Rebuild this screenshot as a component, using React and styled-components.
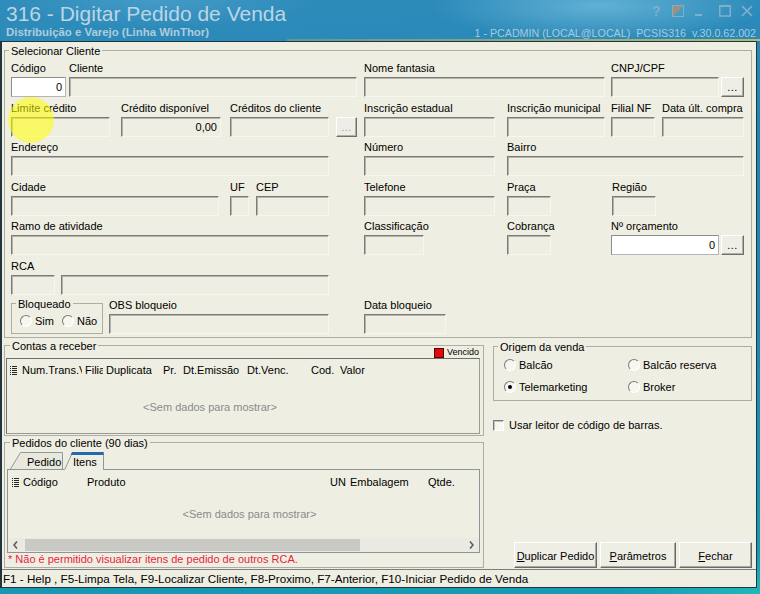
import React from "react";
import styled, { createGlobalStyle } from "styled-components";

const GlobalStyle = createGlobalStyle`
  html, body {
    margin: 0;
    padding: 0;
    background: #1c86b0;
  }
  body {
    font-family: "Liberation Sans", Arial, sans-serif;
    font-size: 11px;
    color: #000;
  }
  * {
    box-sizing: border-box;
  }
`;

const Screen = styled.div`
  position: relative;
  width: 760px;
  height: 594px;
  overflow: hidden;
  display: flex;
  flex-direction: column;
  background:
    radial-gradient(ellipse 240px 50px at 600px 6px, rgba(150, 215, 238, 0.5), transparent 70%),
    radial-gradient(ellipse 220px 40px at 160px 0px, rgba(120, 190, 225, 0.3), transparent 70%),
    radial-gradient(ellipse 200px 60px at 760px 594px, rgba(40, 200, 190, 0.6), transparent 70%),
    linear-gradient(175deg, #2f8cbb 0%, #2385b5 30%, #1b88b2 60%, #169db3 100%);
`;

/* ---------- title area ---------- */

const Header = styled.header`
  position: relative;
  height: 41px;
  flex-shrink: 0;
  display: flex;
  justify-content: space-between;

  &::after {
    content: "";
    position: absolute;
    left: 287px;
    right: 0;
    bottom: 0;
    height: 2px;
    background: linear-gradient(90deg, rgba(190, 180, 90, 0.35), rgba(205, 195, 105, 0.85));
  }
`;

const TitleBlock = styled.div`
  padding: 2px 0 0 6px;
  color: #bcd5e4;
`;

const Title = styled.div`
  font-size: 21px;
  line-height: 24px;
`;

const Subtitle = styled.div`
  font-size: 11.4px;
  font-weight: bold;
  line-height: 13px;
  color: #b0ccdc;
`;

const WinInfo = styled.div`
  display: flex;
  flex-direction: column;
  align-items: flex-end;
  padding: 5px 4px 1px 0;
`;

const Controls = styled.div`
  display: flex;
  align-items: flex-start;
  height: 12px;
  margin-right: 3px;
  color: #7fb0ca;
`;

const Ctl = styled.span`
  display: block;
  width: ${(p) => p.$w}px;
  margin-left: ${(p) => p.$ml || 0}px;
  font-size: 14px;
  font-weight: bold;
  line-height: 12px;
`;

const InfoLine = styled.div`
  margin-top: auto;
  font-size: 10.7px;
  line-height: 13px;
  color: #a8cadb;
  white-space: pre;
`;

/* ---------- window body ---------- */

const Window = styled.div`
  width: 757px;
  height: 547px;
  flex-shrink: 0;
  background: #efeee2;
  border: 1px solid #22343c;
  border-left-width: 2px;
  display: flex;
  flex-direction: column;
`;

const Content = styled.div`
  flex: 1;
  min-height: 0;
  display: flex;
  flex-direction: column;
  padding: 0 4px 0 2px;
`;

const Group = styled.fieldset`
  margin: ${(p) => p.$mt || 0}px 0 0 0;
  min-width: 0;
  padding: ${(p) => p.$pad};
  border: 1px solid #aeada2;
`;

const Legend = styled.legend`
  padding: 3px 2px 0;
  margin-left: ${(p) => p.$ml || 0}px;
  font-size: 11px;
  line-height: 11px;
`;

const Rows = styled.div`
  display: flex;
  flex-direction: column;
  gap: 3.5px;
`;

const Row = styled.div`
  display: flex;
  align-items: flex-end;
  height: 36px;
`;

const FieldCol = styled.div`
  display: flex;
  flex-direction: column;
  width: ${(p) => p.$w}px;
  margin-left: ${(p) => p.$ml || 0}px;
  flex-shrink: 0;
`;

const Label = styled.div`
  height: 14px;
  line-height: 14px;
  margin-bottom: 2px;
  white-space: nowrap;
`;

const InputLine = styled.div`
  display: flex;
  align-items: center;
`;

const Input = styled.div`
  width: ${(p) => p.$w}px;
  height: 20px;
  border: 1px solid;
  border-color: ${(p) =>
    p.$white ? "#8d8d8d #b5b5b5 #b5b5b5 #8d8d8d" : "#7b7b7b #f7f7f2 #f7f7f2 #7b7b7b"};
  box-shadow: ${(p) => (p.$white ? "none" : "inset 1px 1px 0 #b3b3aa")};
  background: ${(p) => (p.$white ? "#ffffff" : "transparent")};
  display: flex;
  align-items: center;
  justify-content: flex-end;
  padding-right: 3px;
  line-height: 14px;
`;

const DotsButton = styled.div`
  width: ${(p) => p.$w}px;
  height: 20px;
  margin-left: ${(p) => p.$ml}px;
  border: 1px solid;
  border-color: #ffffff #6f6f6f #6f6f6f #ffffff;
  box-shadow: inset -1px -1px 0 #b0afa6;
  background: #efeee6;
  color: ${(p) => (p.$off ? "#a3a39a" : "#000")};
  display: flex;
  align-items: flex-end;
  justify-content: center;
  line-height: 14px;
  padding-bottom: 2px;
  letter-spacing: 0.5px;
`;

function Field({ label, w, ml, value, white, btn, btnW = 23, btnGap = 2, btnOff }) {
  const inputW = btn ? w - btnW - btnGap : w;
  return (
    <FieldCol $w={w} $ml={ml}>
      <Label>{label}</Label>
      <InputLine>
        <Input $w={inputW} $white={white}>{value}</Input>
        {btn && (
          <DotsButton $w={btnW} $ml={btnGap} $off={btnOff}>
            ...
          </DotsButton>
        )}
      </InputLine>
    </FieldCol>
  );
}

/* ---------- radios / checks ---------- */

const OptionLabel = styled.label`
  display: flex;
  align-items: center;
  gap: ${(p) => p.$gap || 3}px;
  line-height: 14px;
  white-space: nowrap;
`;

const RadioCircle = styled.span`
  width: 12px;
  height: 12px;
  border-radius: 50%;
  border: 1px solid;
  border-color: #7a7a7a #ffffff #ffffff #7a7a7a;
  background: #f7f7f1;
  display: inline-flex;
  align-items: center;
  justify-content: center;
  flex-shrink: 0;

  &::after {
    content: "";
    width: 4px;
    height: 4px;
    border-radius: 50%;
    background: ${(p) => (p.$checked ? "#000" : "transparent")};
  }
`;

const CheckSquare = styled.span`
  width: 11px;
  height: 11px;
  border: 1px solid;
  border-color: #7a7a7a #ffffff #ffffff #7a7a7a;
  box-shadow: inset 1px 1px 0 #c4c4bc;
  background: #f7f7f1;
  flex-shrink: 0;
`;

function Radio({ label, checked, gap }) {
  return (
    <OptionLabel $gap={gap}>
      <RadioCircle $checked={checked} />
      {label}
    </OptionLabel>
  );
}

const BlockRadios = styled.div`
  display: flex;
  align-items: center;
  gap: 8px;
  height: 16px;
`;

const BlockGroup = styled(Group)`
  width: 92px;
  height: 38px;
  margin-top: -2px;
  flex-shrink: 0;
`;

/* ---------- lower section ---------- */

const Lower = styled.div`
  flex: 1;
  min-height: 0;
  display: grid;
  grid-template-columns: 480px 259px;
  column-gap: 9px;
  padding-bottom: 1px;
`;

const LeftCol = styled.div`
  display: flex;
  flex-direction: column;
`;

const RightCol = styled.div`
  display: flex;
  flex-direction: column;
`;

const VencidoRow = styled.div`
  display: flex;
  justify-content: flex-end;
  align-items: center;
  gap: 3px;
  height: 11px;
  margin-top: -5px;
  padding-right: 1px;
  font-size: 9px;
  line-height: 11px;
`;

const RedSquare = styled.span`
  width: 10px;
  height: 10px;
  background: #e10a0a;
  border: 1px solid #5a0000;
`;

const GridBox = styled.div`
  height: ${(p) => p.$h}px;
  border: 1px solid;
  border-color: #6e6e6e #9a9a94 #9a9a94 #6e6e6e;
  display: flex;
  flex-direction: column;
  background: #efeee2;
`;

const GridHead = styled.div`
  display: flex;
  align-items: center;
  height: ${(p) => p.$h}px;
  padding-left: ${(p) => p.$pl}px;
  flex-shrink: 0;
`;

const HeadCell = styled.div`
  width: ${(p) => (p.$w ? `${p.$w}px` : "auto")};
  margin-right: ${(p) => p.$gap || 0}px;
  flex-shrink: 0;
  overflow: hidden;
  white-space: nowrap;
  padding-left: 1px;
  line-height: 14px;
`;

const IconCell = styled.div`
  width: ${(p) => p.$w}px;
  display: flex;
  align-items: center;
  flex-shrink: 0;
`;

const EmptyMsg = styled.div`
  flex: 1;
  display: flex;
  align-items: center;
  justify-content: center;
  color: #8b8b8b;
  padding: ${(p) => p.$pad || 0};
`;

const ListIcon = () => (
  <svg width="7" height="9" viewBox="0 0 7 9">
    {[0, 2, 4, 6, 8].map((y) => (
      <g key={y} fill="#262626">
        <rect x="0" y={y} width="1" height="1" />
        <rect x="2" y={y} width="5" height="1" />
      </g>
    ))}
  </svg>
);

const TabStrip = styled.div`
  display: flex;
  align-items: flex-end;
  height: 17px;
  padding-left: 3px;
`;

const Tab = styled.div`
  position: relative;
  width: ${(p) => p.$w}px;
  height: ${(p) => (p.$active ? 18 : 17)}px;
  margin-left: ${(p) => p.$ml || 0}px;
  margin-bottom: ${(p) => (p.$active ? -1 : 0)}px;
  padding: 3px 0 0 ${(p) => p.$pl}px;
  line-height: 14px;
  z-index: ${(p) => (p.$active ? 1 : 0)};

  svg {
    position: absolute;
    left: 0;
    top: 0;
  }

  span {
    position: relative;
  }
`;

function TabShape({ w, h, slant, active }) {
  return (
    <svg width={w} height={h} viewBox={`0 0 ${w} ${h}`}>
      <polygon
        points={`0,${h} ${slant},0 ${w},0 ${w},${h}`}
        fill={active ? "#efeee2" : "#e9e8dc"}
      />
      <polyline
        points={`0.5,${h} ${slant + 0.5},0.5 ${w - 0.5},0.5 ${w - 0.5},${h}`}
        fill="none"
        stroke="#8f9aa0"
      />
      {active && (
        <polygon points={`${slant},0 ${w - 0.5},0 ${w - 0.5},3 ${slant - 1.3},3`} fill="#2468ad" />
      )}
    </svg>
  );
}

const TabPage = styled.div`
  height: 84px;
  border: 1px solid #8f9499;
  display: flex;
  flex-direction: column;
`;

const ScrollBar = styled.div`
  height: 14px;
  display: flex;
  align-items: stretch;
  background: #ebeae2;
  flex-shrink: 0;
`;

const ScrollArrow = styled.div`
  width: 15px;
  display: flex;
  align-items: center;
  justify-content: center;
  flex-shrink: 0;
`;

const ScrollTrack = styled.div`
  flex: 1;
  display: flex;
  align-items: stretch;
  padding: 1px 0;
`;

const ScrollThumb = styled.div`
  width: 335px;
  margin-left: 2px;
  background: #c9c9c6;
`;

const Chevron = ({ dir }) => (
  <svg width="5" height="8" viewBox="0 0 5 8">
    <polyline
      points={dir === "left" ? "4,0.5 1,4 4,7.5" : "1,0.5 4,4 1,7.5"}
      fill="none"
      stroke="#5c5c5c"
      strokeWidth="1.6"
    />
  </svg>
);

const RedNote = styled.div`
  height: 13px;
  line-height: 13px;
  padding-left: 1px;
  color: #e81e3c;
  white-space: nowrap;
`;

const OptionGrid = styled.div`
  display: grid;
  grid-template-columns: 124px 1fr;
  grid-auto-rows: 22px;
  align-items: center;
`;

const CheckRow = styled.label`
  display: flex;
  align-items: center;
  gap: 5px;
  margin-top: 18px;
  line-height: 13px;
`;

const ButtonRow = styled.div`
  margin-top: auto;
  display: flex;
  justify-content: flex-end;
  gap: 3px;
  height: 26px;
`;

const Button = styled.button`
  width: ${(p) => p.$w}px;
  height: 26px;
  padding: 2px 0 0;
  border: 1px solid;
  border-color: #ffffff #6a6a6a #6a6a6a #ffffff;
  box-shadow: inset -1px -1px 0 #a9a99f;
  background: #efeee5;
  font-family: "Liberation Sans", Arial, sans-serif;
  font-size: 11px;
  color: #000;
`;

const StatusBar = styled.footer`
  height: 18px;
  flex-shrink: 0;
  border-top: 1px solid #7c7c7c;
  padding-left: 1px;
  font-size: 11.65px;
  line-height: 17px;
  white-space: nowrap;
  overflow: hidden;
`;

const Highlight = styled.div`
  position: absolute;
  left: 8px;
  top: 97px;
  width: 46px;
  height: 46px;
  border-radius: 50%;
  background: rgba(255, 255, 0, 0.55);
  pointer-events: none;
`;

export default function App() {
  return (
    <>
      <GlobalStyle />
      <Screen>
        <Header>
          <TitleBlock>
            <Title>316 - Digitar Pedido de Venda</Title>
            <Subtitle>Distribuição e Varejo (Linha WinThor)</Subtitle>
          </TitleBlock>
          <WinInfo>
            <Controls>
              <Ctl $w={8}>?</Ctl>
              <Ctl $w={12} $ml={12}>
                <svg width="12" height="12" viewBox="0 0 12 12">
                  <polygon points="1,1 11,1 1,11" fill="#a48f7c" />
                  <rect x="0.5" y="0.5" width="11" height="11" fill="none" stroke="currentColor" />
                </svg>
              </Ctl>
              <Ctl $w={8} $ml={11}>
                <svg width="8" height="12" viewBox="0 0 8 12">
                  <rect x="0" y="9" width="7" height="2" fill="currentColor" />
                </svg>
              </Ctl>
              <Ctl $w={12} $ml={16}>
                <svg width="12" height="12" viewBox="0 0 12 12">
                  <rect x="0.75" y="1" width="10.5" height="10" fill="none" stroke="currentColor" strokeWidth="1.5" />
                  <rect x="0" y="0" width="12" height="2" fill="currentColor" />
                </svg>
              </Ctl>
              <Ctl $w={12} $ml={10}>
                <svg width="12" height="12" viewBox="0 0 12 12">
                  <path d="M1 1 L11 11 M11 1 L1 11" stroke="currentColor" strokeWidth="1.7" />
                </svg>
              </Ctl>
            </Controls>
            <InfoLine>1 - PCADMIN (LOCAL@LOCAL)  PCSIS316  v.30.0.62.002</InfoLine>
          </WinInfo>
        </Header>

        <Window>
          <Content>
            <Group $mt={1} $pad="4px 0 3px 6px">
              <Legend $ml={-2}>Selecionar Cliente</Legend>
              <Rows>
                <Row>
                  <Field label="Código" w={55} value="0" white />
                  <Field label="Cliente" w={288} ml={3} />
                  <Field label="Nome fantasia" w={241} ml={7} />
                  <Field label="CNPJ/CPF" w={133} ml={6} btn />
                </Row>
                <Row>
                  <Field label="Limite crédito" w={99} />
                  <Field label="Crédito disponível" w={100} ml={11} value="0,00" />
                  <Field label="Créditos do cliente" w={127} ml={9} btn btnW={21} btnGap={7} btnOff />
                  <Field label="Inscrição estadual" w={131} ml={7} />
                  <Field label="Inscrição municipal" w={98} ml={12} />
                  <Field label="Filial NF" w={44} ml={6} />
                  <Field label="Data últ. compra" w={82} ml={7} />
                </Row>
                <Row>
                  <Field label="Endereço" w={318} />
                  <Field label="Número" w={131} ml={35} />
                  <Field label="Bairro" w={237} ml={12} />
                </Row>
                <Row>
                  <Field label="Cidade" w={208} />
                  <Field label="UF" w={19} ml={11} />
                  <Field label="CEP" w={73} ml={7} />
                  <Field label="Telefone" w={131} ml={35} />
                  <Field label="Praça" w={44} ml={12} />
                  <Field label="Região" w={44} ml={61} />
                </Row>
                <Row>
                  <Field label="Ramo de atividade" w={318} />
                  <Field label="Classificação" w={60} ml={35} />
                  <Field label="Cobrança" w={44} ml={83} />
                  <Field label="Nº orçamento" w={133} ml={60} value="0" white btn />
                </Row>
                <Row>
                  <Field label="RCA" w={44} />
                  <Field label="" w={268} ml={6} />
                </Row>
                <Row>
                  <BlockGroup $pad="3px 0 4px 8px">
                    <Legend $ml={-4}>Bloqueado</Legend>
                    <BlockRadios>
                      <Radio label="Sim" />
                      <Radio label="Não" />
                    </BlockRadios>
                  </BlockGroup>
                  <Field label="OBS bloqueio" w={220} ml={6} />
                  <Field label="Data bloqueio" w={82} ml={35} />
                </Row>
              </Rows>
            </Group>

            <Lower>
              <LeftCol>
                <Group $pad="0 3px 1px 1px">
                  <Legend $ml={4}>Contas a receber</Legend>
                  <VencidoRow>
                    <RedSquare />
                    Vencido
                  </VencidoRow>
                  <GridBox $h={76}>
                    <GridHead $h={22} $pl={3}>
                      <IconCell $w={11}>
                        <ListIcon />
                      </IconCell>
                      <HeadCell $w={61} $gap={2}>Num.Trans.Venda</HeadCell>
                      <HeadCell $w={19} $gap={2}>Filial</HeadCell>
                      <HeadCell $w={57}>Duplicata</HeadCell>
                      <HeadCell $w={20}>Pr.</HeadCell>
                      <HeadCell $w={64}>Dt.Emissão</HeadCell>
                      <HeadCell $w={64}>Dt.Venc.</HeadCell>
                      <HeadCell $w={29}>Cod.</HeadCell>
                      <HeadCell>Valor</HeadCell>
                    </GridHead>
                    <EmptyMsg $pad="0 66px 0 0">&lt;Sem dados para mostrar&gt;</EmptyMsg>
                  </GridBox>
                </Group>

                <Group $mt={-1} $pad="3px 3px 1px 2px">
                  <Legend $ml={3}>Pedidos do cliente (90 dias)</Legend>
                  <TabStrip>
                    <Tab $w={53} $pl={17}>
                      <TabShape w={53} h={17} slant={10} />
                      <span>Pedido</span>
                    </Tab>
                    <Tab $w={40} $pl={9} $ml={1} $active>
                      <TabShape w={40} h={18} slant={8} active />
                      <span>Itens</span>
                    </Tab>
                  </TabStrip>
                  <TabPage>
                    <GridHead $h={24} $pl={4}>
                      <IconCell $w={10}>
                        <ListIcon />
                      </IconCell>
                      <HeadCell $w={64}>Código</HeadCell>
                      <HeadCell $w={243}>Produto</HeadCell>
                      <HeadCell $w={20}>UN</HeadCell>
                      <HeadCell $w={78}>Embalagem</HeadCell>
                      <HeadCell>Qtde.</HeadCell>
                    </GridHead>
                    <EmptyMsg $pad="0 0 5px 12px">&lt;Sem dados para mostrar&gt;</EmptyMsg>
                    <ScrollBar>
                      <ScrollArrow>
                        <Chevron dir="left" />
                      </ScrollArrow>
                      <ScrollTrack>
                        <ScrollThumb />
                      </ScrollTrack>
                      <ScrollArrow>
                        <Chevron dir="right" />
                      </ScrollArrow>
                    </ScrollBar>
                  </TabPage>
                  <RedNote>* Não é permitido visualizar itens de pedido de outros RCA.</RedNote>
                </Group>
              </LeftCol>

              <RightCol>
                <Group $mt={1} $pad="1px 0 2px 10px">
                  <Legend $ml={-6}>Origem da venda</Legend>
                  <OptionGrid>
                    <Radio label="Balcão" />
                    <Radio label="Balcão reserva" />
                    <Radio label="Telemarketing" checked />
                    <Radio label="Broker" />
                  </OptionGrid>
                </Group>
                <CheckRow>
                  <CheckSquare />
                  Usar leitor de código de barras.
                </CheckRow>
                <ButtonRow>
                  <Button $w={83}>
                    <u>D</u>uplicar Pedido
                  </Button>
                  <Button $w={76}>
                    <u>P</u>arâmetros
                  </Button>
                  <Button $w={73}>
                    <u>F</u>echar
                  </Button>
                </ButtonRow>
              </RightCol>
            </Lower>
          </Content>
          <StatusBar>
            F1 - Help , F5-Limpa Tela, F9-Localizar Cliente, F8-Proximo, F7-Anterior, F10-Iniciar Pedido de Venda
          </StatusBar>
        </Window>
        <Highlight />
      </Screen>
    </>
  );
}
